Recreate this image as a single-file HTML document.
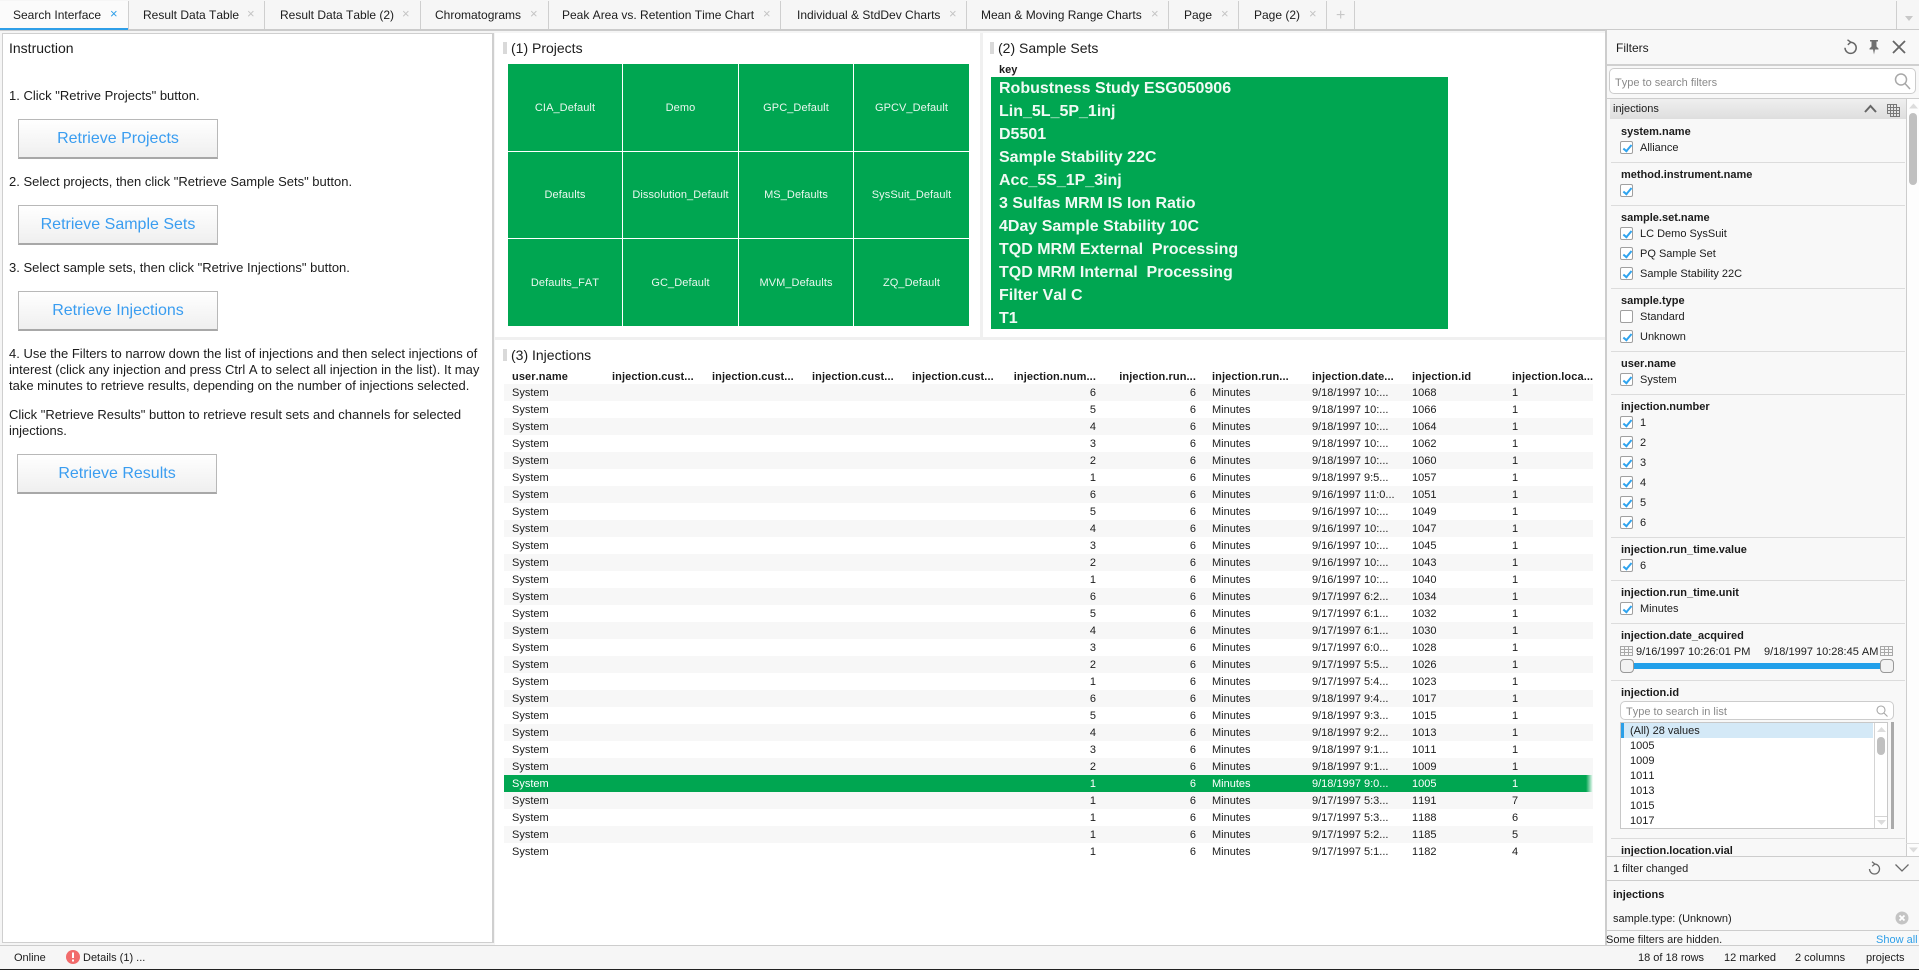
<!DOCTYPE html>
<html><head><meta charset="utf-8"><title>Search Interface</title>
<style>
*{box-sizing:border-box}
html,body{margin:0;padding:0;width:1919px;height:970px;overflow:hidden;background:#f5f5f5;font-family:"Liberation Sans",Arial,sans-serif;color:#1c1c1c;font-kerning:none}
div,svg,span.a{position:absolute}
.t{white-space:pre;line-height:18px;font-size:11px}
.tab{top:6px;font-size:12px;line-height:18px;white-space:pre}
.x{top:6px;font-size:13px;line-height:16px;color:#c4c4c4}
.sep{top:1px;width:1px;height:28px;background:#cfcfcf}
.pt{font-size:14px;line-height:18px;white-space:pre}
.mk{width:4px;height:12px;background:#d9d9d9}
.ins{font-size:13px;line-height:18px;left:9px;white-space:pre}
.btn{width:200px;height:40px;border:1px solid #b8b8b8;border-bottom:2px solid #a8a8a8;background:linear-gradient(#fff,#efefef);color:#3a9df0;font-size:16px;line-height:38px;text-align:center}
.c{background:#00a651;color:#eaf7ef;font-size:11px;letter-spacing:.08px;text-align:center;display:flex;align-items:center;justify-content:center}
.k{left:999px;font-size:16px;font-weight:bold;color:#f0faf4;line-height:24px;white-space:pre}
table{position:absolute;left:504px;top:367px;width:1089px;border-collapse:collapse;table-layout:fixed;font-size:11px}
td,th{height:17px;white-space:nowrap;overflow:hidden;text-align:left}
td{padding:1px 0 0 8px;line-height:16px}
th{font-weight:bold;letter-spacing:.1px;padding:3px 0 0 8px;line-height:14px}
td.r{text-align:right;padding:1px 8px 0 0}
th.r{text-align:right;padding:3px 8px 0 0}
tbody tr:nth-child(odd){background:#f7f7f7}
tr.g,tbody tr.g:nth-child(odd){background:none;color:#fff}
tr.g td{background:#00a651}
tr.g td:last-child{background:linear-gradient(to right,#00a651 calc(100% - 7px),rgba(0,166,81,0))}
.fp{left:1605px;top:30px;width:314px;height:915px;background:#f8f8f8;border-left:2px solid #cdcdcd}
.fl{left:1621px;font-size:11px;font-weight:bold;line-height:18px;white-space:pre}
.fv{left:1640px;font-size:11px;line-height:18px;white-space:pre}
.cb{left:1620px;width:13px;height:13px;border:1px solid #a0a0a0;border-radius:2px;background:#fff}
.cb.on::after{content:"";position:absolute;left:3.5px;top:1px;width:3px;height:7px;border:solid #2fa4ef;border-width:0 2px 2px 0;transform:rotate(40deg)}
.hr{left:1611px;width:294px;height:1px;background:#dcdcdc}
.li{left:1630px;font-size:11px;line-height:17px;white-space:pre}
.hl{height:1px;left:1607px;background:#cdcdcd}
</style></head><body>

<!-- tab bar -->
<div style="left:0;top:0;width:1919px;height:29px;background:#f6f6f6"></div>
<div style="left:0;top:29px;width:1919px;height:2px;background:#cbcbcb"></div>
<div style="left:0;top:1px;width:128px;height:29px;background:#fbfbfb;border-bottom:2px solid #2f9fe8"></div>
<div class="tab" style="left:13px">Search Interface</div><div class="x" style="left:110px;color:#2f9fe8">×</div>
<div class="sep" style="left:128px"></div>
<div class="tab" style="left:143px">Result Data Table</div><div class="x" style="left:247px">×</div>
<div class="sep" style="left:264px"></div>
<div class="tab" style="left:280px">Result Data Table (2)</div><div class="x" style="left:402px">×</div>
<div class="sep" style="left:420px"></div>
<div class="tab" style="left:435px">Chromatograms</div><div class="x" style="left:530px">×</div>
<div class="sep" style="left:548px"></div>
<div class="tab" style="left:562px">Peak Area vs. Retention Time Chart</div><div class="x" style="left:763px">×</div>
<div class="sep" style="left:780px"></div>
<div class="tab" style="left:797px">Individual &amp; StdDev Charts</div><div class="x" style="left:949px">×</div>
<div class="sep" style="left:966px"></div>
<div class="tab" style="left:981px">Mean &amp; Moving Range Charts</div><div class="x" style="left:1151px">×</div>
<div class="sep" style="left:1168px"></div>
<div class="tab" style="left:1184px">Page</div><div class="x" style="left:1221px">×</div>
<div class="sep" style="left:1238px"></div>
<div class="tab" style="left:1254px">Page (2)</div><div class="x" style="left:1309px">×</div>
<div class="sep" style="left:1326px"></div>
<div class="x" style="left:1336px;top:8px;font-size:16px;color:#c8c8c8">+</div>
<div class="sep" style="left:1354px"></div>
<div class="sep" style="left:1896px"></div>
<svg style="left:1904px;top:15px" width="10" height="7"><path d="M1 1h8L5 6z" fill="#c8c8c8"/></svg>

<!-- instruction panel -->
<div style="left:2px;top:33px;width:492px;height:910px;background:#fff;border:1px solid #cfcfcf;border-right-width:2px"></div>
<div class="pt" style="left:9px;top:39px">Instruction</div>
<div class="ins" style="top:87px">1. Click "Retrive Projects" button.</div>
<div class="btn" style="left:18px;top:119px">Retrieve Projects</div>
<div class="ins" style="top:173px">2. Select projects, then click "Retrieve Sample Sets" button.</div>
<div class="btn" style="left:18px;top:205px">Retrieve Sample Sets</div>
<div class="ins" style="top:259px">3. Select sample sets, then click "Retrive Injections" button.</div>
<div class="btn" style="left:18px;top:291px">Retrieve Injections</div>
<div class="ins" style="top:345px">4. Use the Filters to narrow down the list of injections and then select injections of</div>
<div class="ins" style="top:361px">interest (click any injection and press Ctrl A to select all injection in the list). It may</div>
<div class="ins" style="top:377px">take minutes to retrieve results, depending on the number of injections selected.</div>
<div class="ins" style="top:406px">Click "Retrieve Results" button to retrieve result sets and channels for selected</div>
<div class="ins" style="top:422px">injections.</div>
<div class="btn" style="left:17px;top:454px">Retrieve Results</div>

<!-- right white area -->
<div style="left:495px;top:33px;width:1111px;height:912px;background:#fff"></div>
<div style="left:980px;top:33px;width:3px;height:304px;background:#f0f0f0"></div>
<div style="left:495px;top:337px;width:1111px;height:3px;background:#f0f0f0"></div>

<!-- projects -->
<div class="mk" style="left:503px;top:42px"></div>
<div class="pt" style="left:511px;top:39px">(1) Projects</div>
<div class="c" style="left:508px;top:64px;width:114px;height:87px">CIA_Default</div>
<div class="c" style="left:623px;top:64px;width:115px;height:87px">Demo</div>
<div class="c" style="left:739px;top:64px;width:114px;height:87px">GPC_Default</div>
<div class="c" style="left:854px;top:64px;width:115px;height:87px">GPCV_Default</div>
<div class="c" style="left:508px;top:152px;width:114px;height:86px">Defaults</div>
<div class="c" style="left:623px;top:152px;width:115px;height:86px">Dissolution_Default</div>
<div class="c" style="left:739px;top:152px;width:114px;height:86px">MS_Defaults</div>
<div class="c" style="left:854px;top:152px;width:115px;height:86px">SysSuit_Default</div>
<div class="c" style="left:508px;top:239px;width:114px;height:87px">Defaults_FAT</div>
<div class="c" style="left:623px;top:239px;width:115px;height:87px">GC_Default</div>
<div class="c" style="left:739px;top:239px;width:114px;height:87px">MVM_Defaults</div>
<div class="c" style="left:854px;top:239px;width:115px;height:87px">ZQ_Default</div>

<!-- sample sets -->
<div class="mk" style="left:990px;top:42px"></div>
<div class="pt" style="left:998px;top:39px">(2) Sample Sets</div>
<div class="t" style="left:999px;top:61px;font-weight:bold">key</div>
<div style="left:991px;top:77px;width:457px;height:252px;background:#00a651"></div>
<div class="k" style="top:77px">Robustness Study ESG050906</div>
<div class="k" style="top:100px">Lin_5L_5P_1inj</div>
<div class="k" style="top:123px">D5501</div>
<div class="k" style="top:146px">Sample Stability 22C</div>
<div class="k" style="top:169px">Acc_5S_1P_3inj</div>
<div class="k" style="top:192px">3 Sulfas MRM IS Ion Ratio</div>
<div class="k" style="top:215px">4Day Sample Stability 10C</div>
<div class="k" style="top:238px">TQD MRM External  Processing</div>
<div class="k" style="top:261px">TQD MRM Internal  Processing</div>
<div class="k" style="top:284px">Filter Val C</div>
<div class="k" style="top:307px">T1</div>

<!-- injections -->
<div class="mk" style="left:503px;top:349px"></div>
<div class="pt" style="left:511px;top:346px">(3) Injections</div>
<table>
<colgroup><col style="width:100px"><col style="width:100px"><col style="width:100px"><col style="width:100px"><col style="width:100px"><col style="width:100px"><col style="width:100px"><col style="width:100px"><col style="width:100px"><col style="width:100px"><col style="width:89px"></colgroup>
<thead><tr><th>user.name<th>injection.cust...<th>injection.cust...<th>injection.cust...<th>injection.cust...<th class="r">injection.num...<th class="r">injection.run...<th>injection.run...<th>injection.date...<th>injection.id<th>injection.loca...</tr></thead>
<tbody>
<tr><td>System<td colspan="4"><td class="r">6<td class="r">6<td>Minutes<td>9/18/1997 10:...<td>1068<td>1</tr>
<tr><td>System<td colspan="4"><td class="r">5<td class="r">6<td>Minutes<td>9/18/1997 10:...<td>1066<td>1</tr>
<tr><td>System<td colspan="4"><td class="r">4<td class="r">6<td>Minutes<td>9/18/1997 10:...<td>1064<td>1</tr>
<tr><td>System<td colspan="4"><td class="r">3<td class="r">6<td>Minutes<td>9/18/1997 10:...<td>1062<td>1</tr>
<tr><td>System<td colspan="4"><td class="r">2<td class="r">6<td>Minutes<td>9/18/1997 10:...<td>1060<td>1</tr>
<tr><td>System<td colspan="4"><td class="r">1<td class="r">6<td>Minutes<td>9/18/1997 9:5...<td>1057<td>1</tr>
<tr><td>System<td colspan="4"><td class="r">6<td class="r">6<td>Minutes<td>9/16/1997 11:0...<td>1051<td>1</tr>
<tr><td>System<td colspan="4"><td class="r">5<td class="r">6<td>Minutes<td>9/16/1997 10:...<td>1049<td>1</tr>
<tr><td>System<td colspan="4"><td class="r">4<td class="r">6<td>Minutes<td>9/16/1997 10:...<td>1047<td>1</tr>
<tr><td>System<td colspan="4"><td class="r">3<td class="r">6<td>Minutes<td>9/16/1997 10:...<td>1045<td>1</tr>
<tr><td>System<td colspan="4"><td class="r">2<td class="r">6<td>Minutes<td>9/16/1997 10:...<td>1043<td>1</tr>
<tr><td>System<td colspan="4"><td class="r">1<td class="r">6<td>Minutes<td>9/16/1997 10:...<td>1040<td>1</tr>
<tr><td>System<td colspan="4"><td class="r">6<td class="r">6<td>Minutes<td>9/17/1997 6:2...<td>1034<td>1</tr>
<tr><td>System<td colspan="4"><td class="r">5<td class="r">6<td>Minutes<td>9/17/1997 6:1...<td>1032<td>1</tr>
<tr><td>System<td colspan="4"><td class="r">4<td class="r">6<td>Minutes<td>9/17/1997 6:1...<td>1030<td>1</tr>
<tr><td>System<td colspan="4"><td class="r">3<td class="r">6<td>Minutes<td>9/17/1997 6:0...<td>1028<td>1</tr>
<tr><td>System<td colspan="4"><td class="r">2<td class="r">6<td>Minutes<td>9/17/1997 5:5...<td>1026<td>1</tr>
<tr><td>System<td colspan="4"><td class="r">1<td class="r">6<td>Minutes<td>9/17/1997 5:4...<td>1023<td>1</tr>
<tr><td>System<td colspan="4"><td class="r">6<td class="r">6<td>Minutes<td>9/18/1997 9:4...<td>1017<td>1</tr>
<tr><td>System<td colspan="4"><td class="r">5<td class="r">6<td>Minutes<td>9/18/1997 9:3...<td>1015<td>1</tr>
<tr><td>System<td colspan="4"><td class="r">4<td class="r">6<td>Minutes<td>9/18/1997 9:2...<td>1013<td>1</tr>
<tr><td>System<td colspan="4"><td class="r">3<td class="r">6<td>Minutes<td>9/18/1997 9:1...<td>1011<td>1</tr>
<tr><td>System<td colspan="4"><td class="r">2<td class="r">6<td>Minutes<td>9/18/1997 9:1...<td>1009<td>1</tr>
<tr class="g"><td>System<td colspan="4"><td class="r">1<td class="r">6<td>Minutes<td>9/18/1997 9:0...<td>1005<td>1</tr>
<tr><td>System<td colspan="4"><td class="r">1<td class="r">6<td>Minutes<td>9/17/1997 5:3...<td>1191<td>7</tr>
<tr><td>System<td colspan="4"><td class="r">1<td class="r">6<td>Minutes<td>9/17/1997 5:3...<td>1188<td>6</tr>
<tr><td>System<td colspan="4"><td class="r">1<td class="r">6<td>Minutes<td>9/17/1997 5:2...<td>1185<td>5</tr>
<tr><td>System<td colspan="4"><td class="r">1<td class="r">6<td>Minutes<td>9/17/1997 5:1...<td>1182<td>4</tr>
</tbody></table>

<!-- filters -->
<div class="fp"></div>
<div class="t" style="left:1616px;top:39px;font-size:12px">Filters</div>
<svg style="left:1843px;top:39px" width="15" height="16" fill="none" stroke="#666" stroke-width="1.500"><path d="M7.500 3.200A5.600 5.600 0 1 1 2 8.800"/><path d="M4.500 .8L7.800 3.200L4.800 5.800" stroke-width="1.400"/></svg>
<svg style="left:1868px;top:39px" width="12" height="16"><path d="M2 1h8v1.500H8.500v5l2 2v1H7L6 15.500 5 10.500H1.500v-1l2-2v-5H2z" fill="#707070"/></svg>
<svg style="left:1892px;top:40px" width="14" height="14" stroke="#666" stroke-width="1.800"><path d="M1 1L13 13M13 1L1 13"/></svg>
<div class="hl" style="top:64px;width:312px;height:2px;background:#d0d0d0"></div>
<div style="left:1609px;top:68px;width:307px;height:26px;background:#fff;border:1px solid #ccc;border-radius:5px"></div>
<div class="t" style="left:1615px;top:74px;color:#8a8a8a">Type to search filters</div>
<svg style="left:1894px;top:72px" width="17" height="18" fill="none" stroke="#a8a8a8" stroke-width="1.500"><circle cx="7" cy="7.500" r="5.500"/><path d="M11 11.500L16 17"/></svg>
<div class="hl" style="top:98px;width:312px"></div>

<div style="left:1610px;top:99px;width:296px;height:20px;background:linear-gradient(#efefef,#dedede)"></div>
<div class="t" style="left:1613px;top:100px">injections</div>
<svg style="left:1864px;top:104px" width="13" height="9" fill="none" stroke="#666" stroke-width="2"><path d="M1 8L6.500 2L12 8"/></svg>
<svg style="left:1887px;top:104px" width="13" height="13" fill="none" stroke="#777" stroke-width="1"><path d="M.5 .5H9.500V3.500H12.500V12.500H3.500V9.500H.5zM.5 3.500H12.500M.5 6.500H12.500M3.500 9.500H12.500M3.500 .5V12.500M6.500 .5V12.500M9.500 3.500V12.500"/></svg>

<div style="left:1906px;top:99px;width:13px;height:757px;background:#fdfdfd;border-left:1px solid #cdcdcd"></div>
<svg style="left:1909px;top:103px" width="9" height="6"><path d="M0 5.500L4.500 .5L9 5.500z" fill="#dcdcdc"/></svg>
<div style="left:1909px;top:113px;width:8px;height:72px;background:#c0c0c0;border-radius:4px"></div>
<div style="left:1906px;top:843px;width:13px;height:1px;background:#dcdcdc"></div>
<svg style="left:1909px;top:847px" width="9" height="6"><path d="M0 .5L4.500 5.500L9 .5z" fill="#dcdcdc"/></svg>

<div class="fl" style="top:123px">system.name</div>
<div class="cb on" style="top:141px"></div><div class="fv" style="top:139px">Alliance</div>
<div class="hr" style="top:162px"></div>
<div class="fl" style="top:166px">method.instrument.name</div>
<div class="cb on" style="top:184px"></div>
<div class="hr" style="top:205px"></div>
<div class="fl" style="top:209px">sample.set.name</div>
<div class="cb on" style="top:227px"></div><div class="fv" style="top:225px">LC Demo SysSuit</div>
<div class="cb on" style="top:247px"></div><div class="fv" style="top:245px">PQ Sample Set</div>
<div class="cb on" style="top:267px"></div><div class="fv" style="top:265px">Sample Stability 22C</div>
<div class="hr" style="top:288px"></div>
<div class="fl" style="top:292px">sample.type</div>
<div class="cb" style="top:310px"></div><div class="fv" style="top:308px">Standard</div>
<div class="cb on" style="top:330px"></div><div class="fv" style="top:328px">Unknown</div>
<div class="hr" style="top:351px"></div>
<div class="fl" style="top:355px">user.name</div>
<div class="cb on" style="top:373px"></div><div class="fv" style="top:371px">System</div>
<div class="hr" style="top:394px"></div>
<div class="fl" style="top:398px">injection.number</div>
<div class="cb on" style="top:416px"></div><div class="fv" style="top:414px">1</div>
<div class="cb on" style="top:436px"></div><div class="fv" style="top:434px">2</div>
<div class="cb on" style="top:456px"></div><div class="fv" style="top:454px">3</div>
<div class="cb on" style="top:476px"></div><div class="fv" style="top:474px">4</div>
<div class="cb on" style="top:496px"></div><div class="fv" style="top:494px">5</div>
<div class="cb on" style="top:516px"></div><div class="fv" style="top:514px">6</div>
<div class="hr" style="top:537px"></div>
<div class="fl" style="top:541px">injection.run_time.value</div>
<div class="cb on" style="top:559px"></div><div class="fv" style="top:557px">6</div>
<div class="hr" style="top:580px"></div>
<div class="fl" style="top:584px">injection.run_time.unit</div>
<div class="cb on" style="top:602px"></div><div class="fv" style="top:600px">Minutes</div>
<div class="hr" style="top:623px"></div>
<div class="fl" style="top:627px">injection.date_acquired</div>
<svg style="left:1620px;top:646px" width="13" height="10" fill="none" stroke="#a8a8a8"><path d="M.5 .5H12.500V9.500H.5zM.5 3.500H12.500M.5 6.500H12.500M4.500 .5V9.500M8.500 .5V9.500"/></svg>
<div class="t" style="left:1636px;top:643px">9/16/1997 10:26:01 PM</div>
<div class="t" style="left:1764px;top:643px">9/18/1997 10:28:45 AM</div>
<svg style="left:1880px;top:646px" width="13" height="10" fill="none" stroke="#a8a8a8"><path d="M.5 .5H12.500V9.500H.5zM.5 3.500H12.500M.5 6.500H12.500M4.500 .5V9.500M8.500 .5V9.500"/></svg>
<div style="left:1630px;top:663px;width:254px;height:6px;background:#22a0ea"></div>
<div style="left:1620px;top:659px;width:14px;height:14px;background:#f2f2f2;border:1px solid #999;border-radius:4px"></div>
<div style="left:1880px;top:659px;width:14px;height:14px;background:#f2f2f2;border:1px solid #999;border-radius:4px"></div>
<div class="hr" style="top:680px"></div>
<div class="fl" style="top:684px">injection.id</div>
<div style="left:1620px;top:701px;width:274px;height:19px;background:#fff;border:1px solid #ccc;border-radius:5px"></div>
<div class="t" style="left:1626px;top:703px;color:#8a8a8a">Type to search in list</div>
<svg style="left:1876px;top:705px" width="12" height="12" fill="none" stroke="#a8a8a8" stroke-width="1.100"><circle cx="5" cy="5" r="4"/><path d="M8 8L11.500 11.500"/></svg>
<div style="left:1620px;top:722px;width:268px;height:107px;background:#fff;border:1px solid #c8c8c8"></div>
<div style="left:1621px;top:723px;width:252px;height:15px;background:#d4e9f7"></div>
<div style="left:1621px;top:723px;width:3px;height:15px;background:#2a9fe8"></div>
<div class="li" style="top:723px">(All) 28 values</div>
<div class="li" style="top:738px">1005</div>
<div class="li" style="top:753px">1009</div>
<div class="li" style="top:768px">1011</div>
<div class="li" style="top:783px">1013</div>
<div class="li" style="top:798px">1015</div>
<div class="li" style="top:813px;height:15px;overflow:hidden">1017</div>
<div style="left:1874px;top:723px;width:1px;height:105px;background:#d4d4d4"></div>
<div style="left:1875px;top:816px;width:12px;height:1px;background:#d4d4d4"></div>
<svg style="left:1877px;top:727px" width="9" height="5"><path d="M0 5L4.500 0L9 5z" fill="#dcdcdc"/></svg>
<div style="left:1877px;top:737px;width:8px;height:18px;background:#c0c0c0;border-radius:4px"></div>
<svg style="left:1877px;top:820px" width="9" height="5"><path d="M0 0L4.500 5L9 0z" fill="#dcdcdc"/></svg>
<div style="left:1891px;top:722px;width:3px;height:107px;background:#aaa"></div>
<div class="hr" style="top:838px"></div>
<div style="left:1607px;top:842px;width:299px;height:14px;overflow:hidden"><div class="fl" style="left:14px;top:0">injection.location.vial</div></div>

<!-- filter footer -->
<div class="hl" style="top:856px;width:312px"></div>
<div class="t" style="left:1613px;top:860px">1 filter changed</div>
<svg style="left:1868px;top:861px" width="13" height="14" fill="none" stroke="#6a6a6a" stroke-width="1.300"><path d="M6.500 3A5 5 0 1 1 1.500 8"/><path d="M4 .8L6.800 3L4.200 5.300"/></svg>
<svg style="left:1895px;top:864px" width="14" height="8" fill="none" stroke="#6a6a6a" stroke-width="1.300"><path d="M.5 .5L7 7L13.500 .5"/></svg>
<div class="hl" style="top:880px;width:312px"></div>
<div class="t" style="left:1613px;top:886px;font-weight:bold">injections</div>
<div class="t" style="left:1613px;top:910px">sample.type: (Unknown)</div>
<svg style="left:1895px;top:911px" width="14" height="14"><circle cx="7" cy="7" r="6.500" fill="#c4c4c4"/><path d="M4.500 4.500L9.500 9.500M9.500 4.500L4.500 9.500" stroke="#fff" stroke-width="1.800"/></svg>
<div class="hl" style="top:930px;width:312px"></div>
<div class="t" style="left:1606px;top:931px">Some filters are hidden.</div>
<div class="t" style="left:1876px;top:931px;color:#2f9fe8">Show all</div>

<!-- status bar -->
<div style="left:0;top:945px;width:1919px;height:24px;background:#f6f6f6;border-top:1px solid #cdcdcd"></div>
<div style="left:0;top:969px;width:1919px;height:1px;background:#222"></div>
<div class="t" style="left:14px;top:949px">Online</div>
<svg style="left:66px;top:950px" width="14" height="14"><circle cx="7" cy="7" r="7" fill="#f16b6b"/><rect x="6" y="2.500" width="2" height="5.500" fill="#fff"/><rect x="6" y="9.500" width="2" height="2" fill="#fff"/></svg>
<div class="t" style="left:83px;top:949px">Details (1) ...</div>
<div class="t" style="left:1638px;top:949px">18 of 18 rows</div>
<div class="t" style="left:1724px;top:949px">12 marked</div>
<div class="t" style="left:1795px;top:949px">2 columns</div>
<div class="t" style="left:1866px;top:949px">projects</div>
</body></html>
